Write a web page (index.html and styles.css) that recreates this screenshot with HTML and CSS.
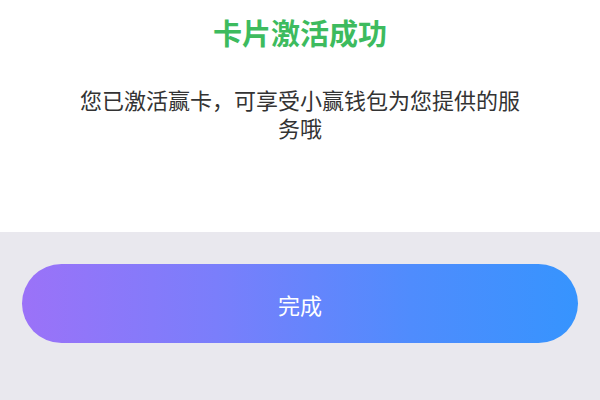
FILE: index.html
```html
<!DOCTYPE html>
<html lang="zh-CN">
<head>
<meta charset="utf-8">
<link rel="stylesheet" href="styles.css">
</head>
<body>
<div class="page">
  <section class="top">
    <h1 class="title">卡片激活成功</h1>
    <p class="desc">您已激活赢卡，可享受小赢钱包为您提供的服务哦</p>
  </section>
  <section class="bottom">
    <button class="btn">完成</button>
  </section>
</div>
</body>
</html>
```
FILE: styles.css
```css
html, body {
  margin: 0;
  padding: 0;
  background: #e9e8ee;
}
.page {
  width: 600px;
  height: 400px;
  display: flex;
  flex-direction: column;
  font-family: "Noto Sans CJK SC", "Noto Sans", sans-serif;
}
.top {
  background: #ffffff;
  height: 232px;
  box-sizing: border-box;
  padding-top: 13px;
  display: flex;
  flex-direction: column;
  align-items: center;
}
.title {
  margin: 0;
  font-size: 29px;
  line-height: 38px;
  font-weight: 700;
  color: #3dbb5e;
}
.desc {
  margin: 34px 0 0;
  width: 460px;
  text-align: center;
  font-size: 22px;
  line-height: 28px;
  color: #333333;
}
.bottom {
  flex: 1;
  background: #e9e8ee;
  padding: 32px 22px 0;
}
.btn {
  display: block;
  width: 100%;
  height: 79px;
  border: none;
  border-radius: 40px;
  background: linear-gradient(90deg, #9b72f8 0%, #7a7efb 35%, #4f8cfd 70%, #3694fe 100%);
  color: #ffffff;
  font-family: "Noto Sans CJK SC", sans-serif;
  font-size: 22px;
  padding: 0;
}
```
